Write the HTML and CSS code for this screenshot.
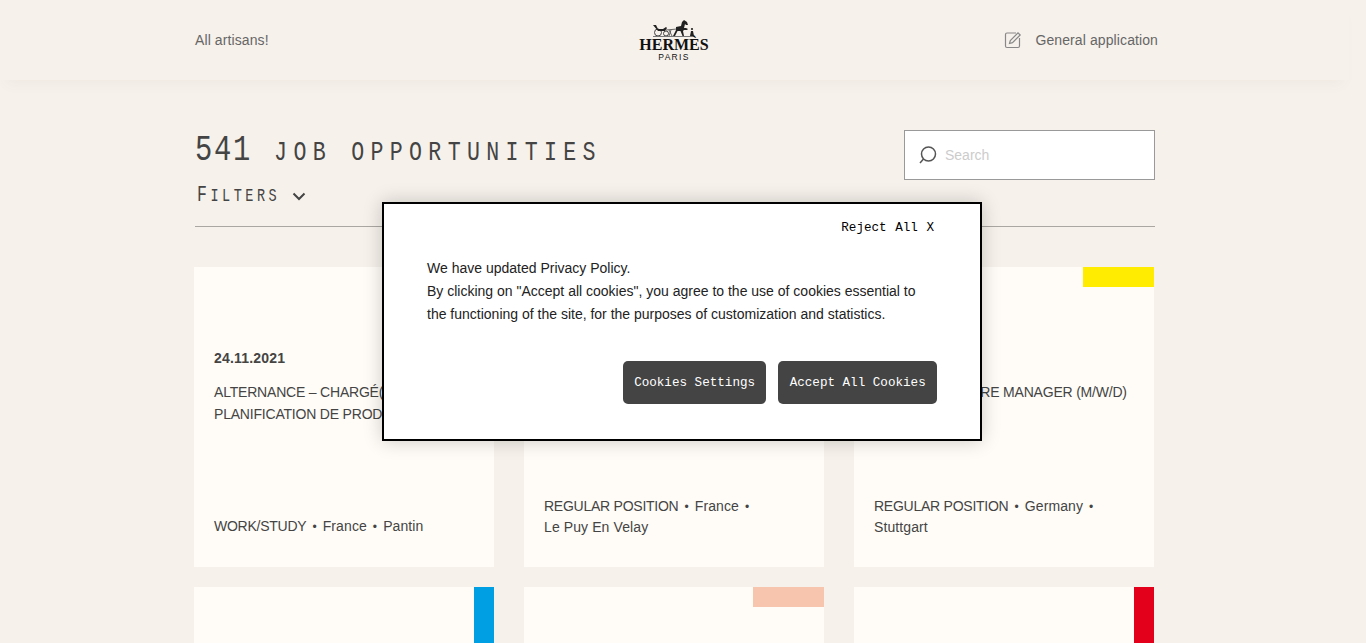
FILE: index.html
```html
<!DOCTYPE html>
<html lang="en">
<head>
<meta charset="utf-8">
<title>Hermès careers</title>
<link rel="stylesheet" href="styles.css">
</head>
<body>
<header class="site-header">
  <div class="header-inner">
    <a class="all-artisans">All artisans!</a>
    <div class="logo">
      <svg class="logo-mark" width="42" height="18" viewBox="0 0 42 18" aria-hidden="true">
        <circle class="logo-wheel" cx="5" cy="12.500" r="3.500"/>
        <circle class="logo-wheel" cx="13" cy="13.500" r="2.500"/>
        <path class="logo-ink" d="M0 5 L3 5 L5 9 L10 9 L13 7 L14 8 L12 11 L5 11 Z"/>
        <path class="logo-thin" d="M13 10 L24 9 M16 10 L19 16 M18 10 L16 16"/>
        <path class="logo-ink" d="M20 16 L23 10 L23 7 L28 6 L29 2 L31 0 L34 2 L35 5 L33 5 L32 4 L31 8 L33 8 L35 9 L34 10 L31 10 L30 11 L31 16 L29.500 16 L27.500 11 L24.500 11 L22 16 Z"/>
        <circle class="logo-ink" cx="39" cy="9" r="1.100"/>
        <path class="logo-ink" d="M38 11 L40 11 L41 16 L37 16 Z"/>
        <rect class="logo-thin-bar" x="0" y="16" width="42" height="1"/>
      </svg>
      <div class="logo-name">HERMÈS</div>
      <div class="logo-city">PARIS</div>
    </div>
    <a class="general-app">
      <svg class="edit-icon" width="18" height="18" viewBox="0 0 18 18" aria-hidden="true">
        <path d="M12 2 H3 Q1.500 2 1.500 3.500 V15 Q1.500 16.500 3 16.500 H14 Q15.500 16.500 15.500 15 V7"/>
        <path d="M5.500 12.500 L6.300 9.500 L14 1.800 L16.200 4 L8.500 11.700 Z"/>
      </svg>
      <span>General application</span>
    </a>
  </div>
</header>

<main class="content">
  <div class="top-row">
    <div class="heading-col">
      <h1 class="page-title"><span class="count">541</span> job opportunities</h1>
      <button class="filters"><span class="filters-label"><span class="filters-initial">F</span>ilters</span>
        <svg width="14" height="9" viewBox="0 0 14 9" aria-hidden="true"><path d="M1.500 1.500 L7 7 L12.500 1.500"/></svg>
      </button>
    </div>
    <label class="search">
      <svg width="20" height="20" viewBox="0 0 20 20" aria-hidden="true">
        <circle cx="10.500" cy="9" r="7"/>
        <path d="M5.500 14 L2 18"/>
      </svg>
      <span class="search-text">Search</span>
    </label>
  </div>
  <hr class="rule">

  <section class="grid">
    <article class="card">
      <p class="date">24.11.2021</p>
      <h2 class="job">ALTERNANCE – CHARGÉ(E) DE PLANIFICATION DE PRODUCTION</h2>
      <p class="meta"><span class="contract">WORK/STUDY</span> <i>•</i> France <i>•</i> Pantin</p>
    </article>
    <article class="card">
      <p class="meta"><span class="contract">REGULAR POSITION</span> <i>•</i> France <i>•</i><br>Le Puy En Velay</p>
    </article>
    <article class="card">
      <span class="tag tag-yellow"></span>
      <p class="date">24.11.2021</p>
      <h2 class="job">ASSISTANT STORE MANAGER (M/W/D)</h2>
      <p class="meta"><span class="contract">REGULAR POSITION</span> <i>•</i> Germany <i>•</i><br>Stuttgart</p>
    </article>
    <article class="card"><span class="tag tag-blue"></span></article>
    <article class="card"><span class="tag tag-peach"></span></article>
    <article class="card"><span class="tag tag-red"></span></article>
  </section>
</main>

<div class="cookie-modal" role="dialog">
  <button class="reject">Reject All X</button>
  <p class="cookie-text">We have updated Privacy Policy.<br>By clicking on "Accept all cookies", you agree to the use of cookies essential to the functioning of the site, for the purposes of customization and statistics.</p>
  <div class="cookie-actions">
    <button class="cookie-btn">Cookies Settings</button>
    <button class="cookie-btn">Accept All Cookies</button>
  </div>
</div>
</body>
</html>
```

FILE: styles.css
```css
* { box-sizing: border-box; }

html, body {
  margin: 0;
  height: 643px;
  overflow: hidden;
}

body {
  background: #f6f1eb;
  color: #444;
  font-family: "Liberation Sans", Arial, sans-serif;
  font-size: 14px;
  position: relative;
}

.site-header {
  height: 80px;
  background: #f6f1eb;
  box-shadow: 0 10px 12px -6px rgba(120, 100, 80, 0.05);
  margin-right: 17px;
}

.header-inner {
  width: 963px;
  margin-left: 195px;
  height: 80px;
  display: flex;
  align-items: center;
  justify-content: space-between;
  position: relative;
  color: #666;
  letter-spacing: 0.1px;
}

.logo {
  position: absolute;
  left: 444px;
  top: 20px;
  width: 70px;
  display: flex;
  flex-direction: column;
  align-items: center;
  color: #111;
  font-family: "Liberation Serif", serif;
  letter-spacing: normal;
}

.logo-mark { display: block; }
.logo-ink { fill: #222; }
.logo-wheel { fill: none; stroke: #444; stroke-width: 1; }
.logo-thin { fill: none; stroke: #444; stroke-width: 0.8; }
.logo-thin-bar { fill: #777; }

.logo-name {
  font-size: 16px;
  font-weight: 700;
  letter-spacing: 0;
  line-height: 14px;
  margin-top: 0;
  white-space: nowrap;
}

.logo-city {
  font-family: "Liberation Sans", sans-serif;
  font-size: 8.500px;
  letter-spacing: 1.300px;
  line-height: 9px;
  margin-top: 1px;
}

.general-app {
  display: flex;
  align-items: center;
  gap: 13px;
}

.edit-icon { fill: none; stroke: #888; stroke-width: 1.200; }

.content {
  padding: 50px 0 0 195px;
  width: 1155px;
}

.top-row {
  display: flex;
  justify-content: space-between;
  align-items: flex-start;
  height: 96px;
}

.page-title {
  margin: 1px 0 0;
  font-family: "Liberation Mono", monospace;
  font-weight: 400;
  font-size: 27px;
  line-height: 40px;
  text-transform: uppercase;
  letter-spacing: 7.900px;
  color: #444;
  white-space: nowrap;
  transform: scaleX(0.8);
  transform-origin: left center;
}

.count {
  font-size: 36px;
  letter-spacing: 2.150px;
  margin-right: 3.500px;
}

.filters {
  display: flex;
  align-items: center;
  gap: 11px;
  margin-top: 9px;
  padding: 0 0 0 2px;
  border: 0;
  background: none;
  color: #444;
  font-family: "Liberation Mono", monospace;
  line-height: 28px;
}

.filters-label {
  display: inline-block;
  font-size: 18px;
  text-transform: uppercase;
  letter-spacing: 4.700px;
  transform: scaleX(0.75);
  transform-origin: left center;
  margin-right: -27px;
}

.filters-initial { font-size: 22px; }

.filters svg { fill: none; stroke: #444; stroke-width: 2; }

.search {
  width: 251px;
  height: 50px;
  border: 1px solid #999;
  background: #fff;
  display: flex;
  align-items: center;
  gap: 7px;
  padding-left: 13px;
  color: #ccc;
}

.search svg { fill: none; stroke: #555; stroke-width: 1.500; }

.rule {
  margin: 0;
  border: 0;
  border-top: 1px solid #aaa6a2;
}

.grid {
  display: grid;
  grid-template-columns: repeat(3, 300px);
  grid-auto-rows: 300px;
  column-gap: 30px;
  row-gap: 20px;
  margin: 40px 0 0 -1px;
}

.card {
  background: #fffcf7;
  padding: 83px 20px 0;
  position: relative;
  display: flex;
  flex-direction: column;
  color: #444;
}

.date {
  margin: 0;
  font-weight: 700;
  line-height: 17px;
  letter-spacing: 0.2px;
}

.job {
  margin: 14px 0 0;
  font-size: 14px;
  font-weight: 400;
  line-height: 22px;
  letter-spacing: -0.2px;
}

.meta {
  position: absolute;
  left: 20px;
  right: 40px;
  bottom: 30px;
  margin: 0;
  line-height: 20px;
  letter-spacing: 0.1px;
}

.contract { letter-spacing: -0.25px; }

.meta i {
  font-style: normal;
  font-size: 12px;
  margin: 0 2px;
}

.tag {
  position: absolute;
  top: 0;
  right: 0;
  height: 20px;
}

.tag-yellow { width: 71px; background: #ffec00; }
.tag-peach { width: 71px; background: #f7c5ae; }
.tag-blue { width: 20px; height: 71px; background: #009fe3; }
.tag-red { width: 20px; height: 71px; background: #e2001a; }

.cookie-modal {
  position: absolute;
  left: 382px;
  top: 202px;
  width: 600px;
  height: 239px;
  background: #fff;
  border: 2px solid #000;
  box-shadow: 0 0 18px rgba(0, 0, 0, 0.2);
  color: #222;
}

.reject {
  position: absolute;
  top: 16px;
  right: 46px;
  padding: 0;
  border: 0;
  background: none;
  color: #000;
  font-family: "Liberation Mono", monospace;
  font-size: 12.600px;
  word-spacing: 1px;
  line-height: 16px;
}

.cookie-text {
  margin: 0;
  padding: 53px 50px 0 43px;
  font-size: 14px;
  line-height: 23px;
}

.cookie-actions {
  position: absolute;
  right: 43px;
  top: 157px;
  display: flex;
  gap: 12px;
}

.cookie-btn {
  height: 43px;
  padding: 0 11.300px;
  border: 0;
  border-radius: 5px;
  background: #444;
  color: #fff;
  font-family: "Liberation Mono", monospace;
  font-size: 12.600px;
}
```
